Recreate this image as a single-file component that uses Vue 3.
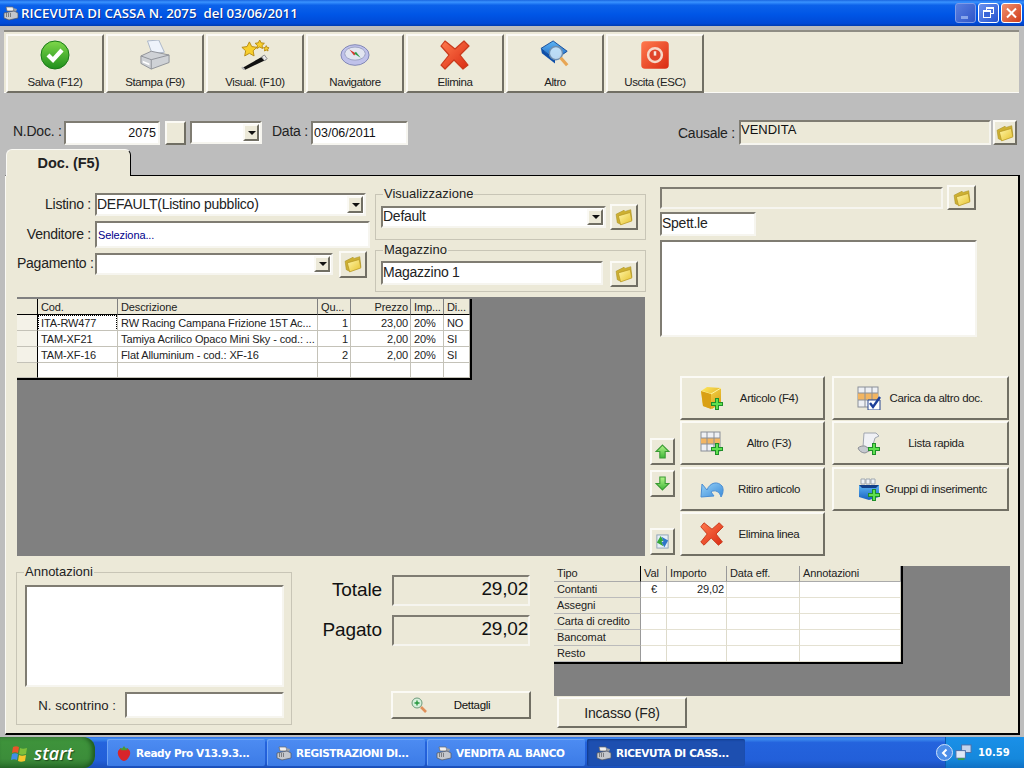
<script setup>
const tools = [
  { label: 'Salva (F12)', icon: 'i-check' },
  { label: 'Stampa (F9)', icon: 'i-printer' },
  { label: 'Visual. (F10)', icon: 'i-wand' },
  { label: 'Navigatore', icon: 'i-compass' },
  { label: 'Elimina', icon: 'i-x' },
  { label: 'Altro', icon: 'i-book' },
  { label: 'Uscita (ESC)', icon: 'i-power' }
]
const rows = [
  { cod: 'ITA-RW477', des: 'RW Racing Campana Frizione 15T Ac...', qu: '1', pr: '23,00', imp: '20%', di: 'NO', focus: true },
  { cod: 'TAM-XF21', des: 'Tamiya Acrilico Opaco Mini Sky - cod.: ...', qu: '1', pr: '2,00', imp: '20%', di: 'SI' },
  { cod: 'TAM-XF-16', des: 'Flat Alluminium - cod.: XF-16', qu: '2', pr: '2,00', imp: '20%', di: 'SI' }
]
const actions = [
  { label: 'Articolo (F4)', icon: 'i-box', side: 'a' },
  { label: 'Carica da altro doc.', icon: 'i-gridcheck', side: 'b' },
  { label: 'Altro (F3)', icon: 'i-gridplus', side: 'a' },
  { label: 'Lista rapida', icon: 'i-scroll', side: 'b' },
  { label: 'Ritiro articolo', icon: 'i-undo', side: 'a' },
  { label: 'Gruppi di inserimentc', icon: 'i-group', side: 'b' },
  { label: 'Elimina linea', icon: 'i-x', side: 'a' }
]
const pays = [
  { t: 'Contanti', v: '€', i: '29,02' },
  { t: 'Assegni', v: '', i: '' },
  { t: 'Carta di credito', v: '', i: '' },
  { t: 'Bancomat', v: '', i: '' },
  { t: 'Resto', v: '', i: '' }
]
const tasks = [
  { label: 'Ready Pro V13.9.3...', icon: 'i-berry' },
  { label: 'REGISTRAZIONI DI...', icon: 'i-till' },
  { label: 'VENDITA AL BANCO', icon: 'i-till' },
  { label: 'RICEVUTA DI CASS...', icon: 'i-till', active: true }
]
</script>

<template>
  <div class="win">
    <svg class="defs" width="0" height="0" aria-hidden="true">
      <defs>
        <linearGradient id="gGreen" x1="0" y1="0" x2="0" y2="1"><stop offset="0" stop-color="#7fd84a"/><stop offset="1" stop-color="#1f8f1c"/></linearGradient>
        <linearGradient id="gLime" x1="0" y1="0" x2="0" y2="1"><stop offset="0" stop-color="#b4f58a"/><stop offset="1" stop-color="#3fb838"/></linearGradient>
        <linearGradient id="gRed" x1="0" y1="0" x2="1" y2="1"><stop offset="0" stop-color="#ff7a4d"/><stop offset="1" stop-color="#d92a12"/></linearGradient>
        <linearGradient id="gGold" x1="0" y1="0" x2="1" y2="1"><stop offset="0" stop-color="#fff6a8"/><stop offset="1" stop-color="#e6c22e"/></linearGradient>
        <linearGradient id="gCube" x1="0" y1="0" x2="1" y2="1"><stop offset="0" stop-color="#ffe95e"/><stop offset="1" stop-color="#d69a10"/></linearGradient>
        <linearGradient id="gBlue" x1="0" y1="0" x2="0" y2="1"><stop offset="0" stop-color="#5db6f5"/><stop offset="1" stop-color="#1a62c0"/></linearGradient>
        <linearGradient id="gSky" x1="0" y1="0" x2="1" y2="1"><stop offset="0" stop-color="#9ad4f8"/><stop offset="1" stop-color="#3a8ad8"/></linearGradient>
      </defs>
      <symbol id="i-plus" viewBox="0 0 12 12"><path d="M4 0h4v4h4v4H8v4H4V8H0V4h4z" fill="#1f8f2a"/><path d="M5 1h2v4h4v2H7v4H5V7H1V5h4z" fill="#5fe04f"/></symbol>
      <symbol id="i-check" viewBox="0 0 30 30"><circle cx="15" cy="15" r="14" fill="url(#gGreen)" stroke="#1a7a18"/><path d="M8 15l5 5 9-10" fill="none" stroke="#fff" stroke-width="4.2"/></symbol>
      <symbol id="i-printer" viewBox="0 0 32 32"><path d="M8 1l12-1 6 13-13 2z" fill="#eef3fb" stroke="#a9b4c6"/><path d="M1 17l11-5 19 4v8L12 31 1 25z" fill="#cfd2d6" stroke="#8d9096"/><path d="M1 17l11 4 19-5" fill="none" stroke="#8d9096"/><path d="M12 21v10" stroke="#8d9096"/><path d="M3 22l7 3v2l-7-3z" fill="#fff"/></symbol>
      <symbol id="i-wand" viewBox="0 0 32 32"><path d="M2 30l23-13 3 4L5 32z" fill="#111"/><path d="M23 18l3-2 3 4-3 2z" fill="#e8e8e8" stroke="#888"/><path d="M2 29l3 3" stroke="#bbb" stroke-width="2"/><path d="M10 2l2.500 5 5.500.8-4 3.700 1 5.500-5-2.800-5 2.800 1-5.500-4-3.700 5.500-.8z" fill="#f8cf2c" stroke="#b58a10"/><path d="M21 0l1.500 3 3.500.5-2.500 2.300.6 3.300-3.100-1.700-3 1.700.6-3.300-2.500-2.300 3.400-.5z" fill="#f8cf2c" stroke="#b58a10"/><path d="M28 6l1 2 2 .3-1.500 1.400.4 2-1.900-1-1.900 1 .4-2-1.500-1.400 2-.3z" fill="#f8cf2c" stroke="#b58a10"/></symbol>
      <symbol id="i-compass" viewBox="0 0 32 32"><ellipse cx="16" cy="16" rx="15" ry="11" fill="#bfc1ea" stroke="#7d83b2"/><ellipse cx="16" cy="14.500" rx="11" ry="7" fill="#e2e5f0" stroke="#9aa0c0"/><path d="M10 10l7 4.500-2 2z" fill="#d8342a"/><path d="M22 19l-7-4.500 2-2z" fill="#2d9a44"/></symbol>
      <symbol id="i-x" viewBox="0 0 30 30"><path d="M5 1l10 8 9-8 5 5-9 9 8 10-5 4-9-9-9 9-4-4 8-10L1 6z" fill="url(#gRed)" stroke="#c93a1c" stroke-linejoin="round" stroke-width="1.200"/></symbol>
      <symbol id="i-book" viewBox="0 0 32 32"><path d="M1 9L14 1l15 11-13 9z" fill="url(#gBlue)" stroke="#124a99"/><path d="M1 9l15 12v4L2 14z" fill="#0f4fa8"/><circle cx="17" cy="14" r="7" fill="#d4ebfa" fill-opacity=".85" stroke="#6f8fb0" stroke-width="1.500"/><path d="M22 19l7 8" stroke="#e8a654" stroke-width="3.400"/></symbol>
      <symbol id="i-power" viewBox="0 0 24 24"><rect x="1" y="1" width="22" height="22" rx="3" fill="url(#gRed)"/><circle cx="12" cy="12" r="5.500" fill="#e0442a" stroke="#f6d8c8" stroke-width="2"/><path d="M12 9v3.500" stroke="#f6e8e0" stroke-width="2"/></symbol>
      <symbol id="i-folder" viewBox="0 0 16 16"><path d="M1 5.500l7-3.500 1 1 5-1.500 1 9-10 4-3-1.500z" fill="#cdb032" stroke="#a88f20" stroke-width=".5"/><path d="M3 7l10.500-3 1.500 7.500-10 3.500z" fill="url(#gGold)" stroke="#b39420" stroke-width=".6"/></symbol>
      <symbol id="i-box" viewBox="0 0 24 24"><path d="M1 5l6-4 14 1v15l-9 6-9-3z" fill="url(#gCube)"/><path d="M1 5l10 3 10-6" fill="none" stroke="#fff3a0"/><path d="M11 8v15l-8-3-2-15z" fill="#d9a015"/><use href="#i-plus" x="11" y="12" width="12" height="12"/></symbol>
      <symbol id="i-gridcheck" viewBox="0 0 24 24"><rect x="1" y="1" width="20" height="20" fill="#eef0f4" stroke="#8a8f98"/><rect x="1" y="7" width="20" height="7" fill="#f2b562"/><path d="M8 1v20M15 1v20M1 7h20M1 14h20" stroke="#8a8f98"/><path d="M11 14h12v10H11z" fill="#fff" stroke="#28468f"/><path d="M13 17l3 4 7-10" fill="none" stroke="#1c3f9a" stroke-width="2.400"/></symbol>
      <symbol id="i-gridplus" viewBox="0 0 24 24"><rect x="1" y="1" width="19" height="19" fill="#eef0f4" stroke="#8a8f98"/><rect x="1" y="7" width="19" height="6" fill="#f2b562"/><path d="M7 1v19M14 1v19M1 7h19M1 13h19" stroke="#8a8f98"/><use href="#i-plus" x="11" y="12" width="12" height="12"/></symbol>
      <symbol id="i-scroll" viewBox="0 0 24 24"><path d="M7 2h12l3 3-4 2-3 10-9-1z" fill="#f0f1f5" stroke="#a0a6b0"/><path d="M1 17c2-2 4-2 7-2l6 4-6 3c-3 0-6-2-7-5z" fill="#c6c9cf" stroke="#8d9096"/><use href="#i-plus" x="11" y="12" width="12" height="12"/></symbol>
      <symbol id="i-undo" viewBox="0 0 24 24"><path d="M7 13C10 5 18 4 22 9c2 3 1 8-1 11-1-5-6-8-10-5l3 4-13 1 1-13z" fill="url(#gSky)" stroke="#4a8ed4"/></symbol>
      <symbol id="i-group" viewBox="0 0 24 24"><path d="M2 8h20v12l-10 3-10-3z" fill="url(#gBlue)"/><path d="M4 2h4v5H4zM9 2h4v5H9zM14 2h4v5h-4z" fill="#eef2f6" stroke="#a0a8b0"/><path d="M2 8h20l-3 3H5z" fill="#123f88"/><use href="#i-plus" x="11" y="12" width="12" height="12"/></symbol>
      <symbol id="i-up" viewBox="0 0 14 14"><path d="M7 1l6 6H9.500v6h-5V7H1z" fill="url(#gLime)" stroke="#3a9a34"/></symbol>
      <symbol id="i-down" viewBox="0 0 14 14"><path d="M7 13l6-6H9.500V1h-5v6H1z" fill="url(#gLime)" stroke="#3a9a34"/></symbol>
      <symbol id="i-refresh" viewBox="0 0 16 16"><rect x="2" y="1" width="12" height="14" fill="#e6eff6" stroke="#8ea2b4"/><path d="M2 9l4-7 3 5-2 1 2 5z" fill="#35a83a"/><path d="M14 7l-4 7-3-5 2-1-2-5z" fill="#2f76c8"/></symbol>
      <symbol id="i-zoom" viewBox="0 0 16 16"><circle cx="6" cy="6" r="5" fill="#d6f0dc" stroke="#6d9a7a"/><path d="M6 3.500v5M3.500 6h5" stroke="#25963c" stroke-width="1.400"/><path d="M10 10l5 5" stroke="#e0905a" stroke-width="2.600"/></symbol>
      <symbol id="i-berry" viewBox="0 0 16 18"><path d="M8 5c4-2 7 0 7 4 0 4-4 9-7 9s-7-5-7-9c0-4 3-6 7-4z" fill="#d8242a"/><path d="M3 3l3 1 2-3 2 3 3-1-2 3H5z" fill="#4a9a30"/></symbol>
      <symbol id="i-till" viewBox="0 0 16 16"><path d="M3 2h7l1 4H4z" fill="#eef0f2" stroke="#666" stroke-width=".7"/><path d="M10 3l4 1-1 3-2-1z" fill="#9aa0a8"/><path d="M1 8l10-2 4 2v5l-9 2-5-2z" fill="#c4c7cc" stroke="#55585e" stroke-width=".7"/><path d="M3 9h1M5 9h1M7 9h1M3 11h1M5 11h1M7 11h1" stroke="#333"/></symbol>
      <symbol id="i-flag" viewBox="0 0 18 18"><path d="M2 3c2-1 4-1 6 0l-1 6c-2-1-4-1-6 0z" fill="#e8552a"/><path d="M9 4c2 1 4 1 7 0l-1 6c-3 1-5 1-7 0z" fill="#7ec03a"/><path d="M1 10c2-1 4-1 6 0l-1 6c-2-1-4-1-6 0z" fill="#3f8ee8"/><path d="M8 11c2 1 4 1 7 0l-1 6c-3 1-5 1-7 0z" fill="#f6c62c"/></symbol>
      <symbol id="i-net" viewBox="0 0 18 18"><rect x="7" y="1" width="10" height="8" fill="#c4d4ec" stroke="#4a6ea8"/><rect x="1" y="7" width="10" height="8" fill="#dfe8f6" stroke="#4a6ea8"/><path d="M3 16h7" stroke="#39a04a" stroke-width="2"/></symbol>
    </svg>

    <header class="title">
      <svg class="title-ico"><use href="#i-till"/></svg>
      <span class="title-text">RICEVUTA DI CASSA N. 2075&nbsp; del 03/06/2011</span>
      <span class="cap cap-min"><i></i></span>
      <span class="cap cap-res"><i></i><b></b></span>
      <span class="cap cap-close">
        <svg viewBox="0 0 12 12"><path d="M1.500 1.500l9 9M10.500 1.500l-9 9" stroke="#fff" stroke-width="2"/></svg>
      </span>
    </header>

    <main class="client">
      <nav class="toolbar">
        <button v-for="t in tools" :key="t.label" class="raised tool">
          <svg class="tool-ico"><use :href="'#' + t.icon"/></svg>
          <span>{{ t.label }}</span>
        </button>
      </nav>

      <section class="docrow">
        <label class="l14 ndoc">N.Doc. :</label>
        <div class="sunken f-ndoc num">2075</div>
        <button class="raised b-small"></button>
        <div class="sunken f-combo"><span class="raised arrow"><i></i></span></div>
        <label class="l14 ldata">Data :</label>
        <div class="sunken f-data">03/06/2011</div>
        <label class="l14 lcaus">Causale :</label>
        <div class="sunken f-caus beige">VENDITA</div>
        <button class="raised fold f-foldc"><svg><use href="#i-folder"/></svg></button>
      </section>

      <div class="tab">Doc. (F5)</div>

      <section class="panel">
        <div class="upper">
          <div class="left">
            <div class="forms">
              <div class="forms-a">
                <div class="frow h23">
                  <label class="l14">Listino :</label>
                  <div class="sunken w271 txt">DEFAULT(Listino pubblico)<span class="raised arrow"><i></i></span></div>
                </div>
                <div class="frow h27">
                  <label class="l14">Venditore :</label>
                  <div class="sunken w275 sel">Seleziona...</div>
                </div>
                <div class="frow h22">
                  <label class="l14">Pagamento :</label>
                  <div class="sunken w238"><span class="raised arrow"><i></i></span></div>
                  <button class="raised fold f-foldp"><svg><use href="#i-folder"/></svg></button>
                </div>
              </div>
              <div class="forms-b">
                <fieldset class="group g-vis">
                  <legend>Visualizzazione</legend>
                  <div class="grow">
                    <div class="sunken w225 txt">Default<span class="raised arrow"><i></i></span></div>
                    <button class="raised fold f-fold28"><svg><use href="#i-folder"/></svg></button>
                  </div>
                </fieldset>
                <fieldset class="group g-mag">
                  <legend>Magazzino</legend>
                  <div class="grow">
                    <div class="sunken w222 txt">Magazzino 1</div>
                    <button class="raised fold f-fold28"><svg><use href="#i-folder"/></svg></button>
                  </div>
                </fieldset>
              </div>
            </div>

            <div class="gridarea">
              <table class="grid maingrid">
                <colgroup><col class="c0"><col class="c1"><col class="c2"><col class="c3"><col class="c4"><col class="c5"><col class="c6"></colgroup>
                <thead>
                  <tr><th></th><th>Cod.</th><th>Descrizione</th><th>Qu...</th><th class="r">Prezzo</th><th>Imp...</th><th>Di...</th></tr>
                </thead>
                <tbody>
                  <tr v-for="r in rows" :key="r.cod">
                    <th class="rh"></th>
                    <td><span :class="{ focus: r.focus }">{{ r.cod }}</span></td>
                    <td class="clip">{{ r.des }}</td>
                    <td class="r">{{ r.qu }}</td>
                    <td class="r">{{ r.pr }}</td>
                    <td>{{ r.imp }}</td>
                    <td>{{ r.di }}</td>
                  </tr>
                  <tr class="blank"><th></th><td></td><td></td><td></td><td></td><td></td><td></td></tr>
                </tbody>
              </table>
            </div>
          </div>

          <div class="right">
            <div class="r-top">
              <div class="rrow">
                <div class="sunken w283 beige"></div>
                <button class="raised fold f-foldr"><svg><use href="#i-folder"/></svg></button>
              </div>
              <div class="sunken w96 txt">Spett.le</div>
              <div class="sunken w317"></div>
            </div>
            <div class="r-bottom">
              <div class="arrows">
                <button class="raised arrowbtn"><svg><use href="#i-up"/></svg></button>
                <button class="raised arrowbtn"><svg><use href="#i-down"/></svg></button>
                <button class="raised arrowbtn lastb"><svg><use href="#i-refresh"/></svg></button>
              </div>
              <div class="actions">
                <button v-for="a in actions" :key="a.label" class="raised action" :class="a.side">
                  <svg><use :href="'#' + a.icon"/></svg>
                  <span>{{ a.label }}</span>
                </button>
              </div>
            </div>
          </div>
        </div>

        <div class="lower">
          <fieldset class="group g-ann">
            <legend>Annotazioni</legend>
            <div class="sunken ann-box"></div>
            <div class="scont">
              <label class="l14">N. scontrino :</label>
              <div class="sunken scont-f"></div>
            </div>
          </fieldset>

          <div class="totals">
            <div class="trow"><label>Totale</label><div class="sunken beige tval">29,02</div></div>
            <div class="trow"><label>Pagato</label><div class="sunken beige tval">29,02</div></div>
            <button class="raised dett"><svg><use href="#i-zoom"/></svg><span>Dettagli</span></button>
          </div>

          <div class="pay">
            <div class="pay-area">
              <table class="grid paygrid">
                <colgroup><col class="p0"><col class="p1"><col class="p2"><col class="p3"><col class="p4"></colgroup>
                <thead>
                  <tr><th>Tipo</th><th>Val</th><th>Importo</th><th>Data eff.</th><th>Annotazioni</th></tr>
                </thead>
                <tbody>
                  <tr v-for="p in pays" :key="p.t">
                    <th class="ptype">{{ p.t }}</th>
                    <td class="ctr">{{ p.v }}</td>
                    <td class="r">{{ p.i }}</td>
                    <td></td>
                    <td></td>
                  </tr>
                </tbody>
              </table>
            </div>
            <button class="raised incasso">Incasso (F8)</button>
          </div>
        </div>
      </section>
    </main>

    <footer class="taskbar">
      <div class="start"><svg><use href="#i-flag"/></svg><span>start</span></div>
      <div class="tasks">
        <div v-for="t in tasks" :key="t.label" class="task" :class="{ active: t.active }">
          <svg><use :href="'#' + t.icon"/></svg>
          <span>{{ t.label }}</span>
        </div>
      </div>
      <div class="tray">
        <span class="chev">
          <svg viewBox="0 0 10 10"><path d="M6.500 1.500L3 5l3.500 3.500" fill="none" stroke="#fff" stroke-width="2"/></svg>
        </span>
        <svg class="net"><use href="#i-net"/></svg>
        <span class="clock">10.59</span>
      </div>
    </footer>
  </div>
</template>

<style>
html, body { margin: 0; padding: 0; }
</style>

<style scoped>
* { box-sizing: border-box; }
.defs { position: absolute; }
.win {
  width: 1024px; height: 768px; overflow: hidden; display: flex; flex-direction: column;
  background: #bdbdbd; font-family: "Liberation Sans", Arial, sans-serif; color: #111; font-size: 12px;
}
button { font-family: inherit; color: inherit; padding: 0; margin: 0; }
.raised {
  background: #ece9d8; border: 2px solid; border-color: #fbfaf5 #716f64 #716f64 #fbfaf5; border-radius: 0;
}
.sunken {
  position: relative; background: #fff; border: 2px solid; border-color: #7f7c72 #f6f5ef #f6f5ef #7f7c72;
  flex: none;
}
.beige { background: #ece9d8; }
.l14 { font-size: 14px; color: #222; white-space: nowrap; letter-spacing: -.25px; }

/* title */
.title {
  height: 26px; flex: none; display: flex; align-items: center; color: #fff; padding-right: 2px;
  background: linear-gradient(180deg, #1a66e0 0, #3a93ff 8%, #0c62ea 20%, #0056e6 55%, #0049d6 90%, #003cb0 100%);
}
.title-ico { width: 16px; height: 16px; margin-left: 3px; }
.title-text { font-family: "Open Sans", sans-serif; font-weight: 600; font-size: 13.300px; margin-left: 2px; flex: 1; text-shadow: 1px 1px 0 #0a2f8c; white-space: nowrap; }
.cap { width: 21px; height: 20px; border: 1px solid #fff; border-radius: 3px; margin-left: 2px; position: relative; display: block; flex: none; background: linear-gradient(135deg, #6d93ee, #2452cf); }
.cap-min { background: linear-gradient(135deg, #5a7fe0, #2e55c8); border-color: #7c9be8; }
.cap-min i { position: absolute; left: 5px; bottom: 3px; width: 7px; height: 3px; background: #88a5ea; }
.cap-res i { position: absolute; left: 7px; top: 3px; width: 8px; height: 7px; border: 1px solid #fff; border-top-width: 2px; }
.cap-res b { position: absolute; left: 4px; top: 6px; width: 8px; height: 8px; border: 1px solid #fff; border-top-width: 2px; background: #3a65d8; }
.cap-close { background: linear-gradient(135deg, #f0916f, #d13c1a); }
.cap-close svg { position: absolute; left: 3px; top: 3px; width: 13px; height: 12px; }

/* client */
.client { flex: 1; display: flex; flex-direction: column; padding: 4px 5px 0 5px; min-height: 0; }
.toolbar { height: 63px; background: #ece9d8; margin-left: -1px; border-bottom: 1px solid #fbfaf5; border-top: 2px solid #8f8d84; display: flex; gap: 2px; padding: 2px 0 0 2px; flex: none; }
.tool { width: 98px; height: 59px; display: flex; flex-direction: column; align-items: center; font-size: 11.500px; letter-spacing: -.42px; padding-top: 4px; color: #222; }
.tool-ico { width: 30px; height: 30px; margin-bottom: 6px; display: block; }
.docrow { display: flex; align-items: flex-start; height: 27px; margin-top: 27px; flex: none; }
.docrow .l14 { padding-top: 3px; }
.ndoc { margin-left: 8px; width: 51px; }
.f-ndoc { width: 96px; height: 24px; margin-top: 1px; font-size: 12.500px; line-height: 20px; padding-right: 2px; text-align: right; }
.b-small { width: 21px; height: 24px; margin: 1px 0 0 5px; }
.f-combo { width: 72px; height: 23px; margin: 1px 0 0 4px; }
.ldata { margin-left: 10px; width: 39px; }
.f-data { width: 97px; height: 24px; margin-top: 1px; font-size: 12.500px; line-height: 20px; padding-left: 1px; }
.lcaus { margin-left: 270px; width: 61px; padding-top: 5px !important; }
.f-caus { width: 252px; height: 25px; font-size: 13px; line-height: 16px; }
.f-foldc { width: 24px; height: 25px; margin-left: 2px; }

.arrow { position: absolute; right: 1px; top: 1px; bottom: 1px; width: 16px; display: block; }
.arrow i { position: absolute; left: 3px; top: 50%; margin-top: -2px; border: 4px solid transparent; border-top: 4px solid #111; border-bottom: 0; }
.fold { display: flex; align-items: center; justify-content: center; flex: none; }
.fold svg { width: 18px; height: 18px; }

.tab {
  width: 125px; height: 27px; margin: 2px 0 0 1px; background: #ece9d8; border: 1px solid #000; border-bottom: 0;
  border-left-color: #fbfaf5; border-top-color: #fbfaf5; border-radius: 6px 6px 0 0; font-weight: 700; font-size: 14.500px;
  text-align: center; line-height: 26px; color: #222; flex: none; position: relative; z-index: 1; margin-bottom: -1px;
}
.panel {
  height: 560px; flex: none; width: 1015px; background: #ece9d8; border: 1px solid #000; border-left-color: #fbfaf5;
  border-width: 1px 2px 2px 1px; padding: 0 0 0 10px; display: flex; flex-direction: column;
}
.upper { display: flex; height: 380px; flex: none; }
.left { width: 628px; flex: none; margin-left: 1px; }
.forms { display: flex; height: 121px; }
.forms-a { width: 358px; flex: none; padding-top: 17px; display: flex; flex-direction: column; gap: 5px; }
.frow { display: flex; align-items: center; }
.frow .l14 { width: 74px; text-align: right; margin-right: 4px; flex: none; padding-bottom: 2px; }
.h23 { height: 23px; } .h27 { height: 27px; } .h22 { height: 22px; }
.txt { font-size: 14px; padding-left: 0; line-height: 19px; color: #222; letter-spacing: -.25px; }
.w271 { width: 271px; height: 23px; }
.w275 { width: 275px; height: 27px; }
.sel { font-size: 11px; color: #00008b; line-height: 24px; padding-left: 1px; letter-spacing: -.1px; }
.w238 { width: 238px; height: 22px; }
.f-foldp { width: 28px; height: 27px; margin-left: 6px; }
.forms-b { flex: 1; padding-top: 10px; display: flex; flex-direction: column; gap: 2px; }
.group { margin: 0; padding: 0; border: 1px solid #c8c5b6; min-width: 0; }
.group legend { font-size: 13px; line-height: 16px; margin-left: 7px; padding: 0 1px; color: #222; }
.g-vis { height: 54px; width: 271px; }
.g-mag { height: 50px; width: 271px; }
.grow { display: flex; padding: 2px 0 0 5px; gap: 4px; align-items: flex-start; }
.g-mag .grow { padding-top: 3px; gap: 7px; }
.w225 { width: 225px; height: 22px; margin-top: 2px; line-height: 17px; }
.w222 { width: 222px; height: 24px; line-height: 18px; }
.f-fold28 { width: 28px; height: 26px; }

.gridarea { height: 259px; background: #808080; padding-top: 2px; }
.grid { border-collapse: separate; border-spacing: 0; table-layout: fixed; background: #fff; font-size: 11px; color: #222; border-right: 2px solid #000; border-bottom: 2px solid #000; letter-spacing: -.12px; }
.maingrid { width: 455px; }
.grid th, .grid td { height: 16px; padding: 1px 2px 0 3px; font-weight: 400; text-align: left; white-space: nowrap; overflow: hidden; line-height: 14px; border-right: 1px solid #c4c2b8; border-bottom: 1px solid #c4c2b8; }
.grid thead th { background: #ece9d8; border-right-color: #808080; border-bottom: 1px solid #000; }
.grid tbody tr > th:first-child { background: #f4f2e8; border-right: 1px solid #000; }
.grid tbody .blank th { background: #ece9d8 !important; }
.grid thead th:first-child { border-right-color: #000; }
.grid .r { text-align: right; }
.grid tr:last-child td, .grid tr:last-child th { height: 15px; }
.c0 { width: 21px; } .c1 { width: 80px; } .c2 { width: 200px; } .c3 { width: 33px; } .c4 { width: 60px; } .c5 { width: 33px; } .c6 { width: 26px; }
.focus { display: block; outline: 1px dotted #000; outline-offset: 0; margin-left: -2px; padding-left: 2px; margin-right: -1px; }

.right { flex: 1; padding-left: 5px; display: flex; flex-direction: column; justify-content: space-between; }
.r-top { padding: 10px 0 0 10px; display: flex; flex-direction: column; gap: 3px; }
.rrow { display: flex; align-items: center; gap: 4px; height: 23px; }
.w283 { width: 283px; height: 22px; }
.f-foldr { width: 29px; height: 25px; }
.w96 { width: 96px; height: 24px; line-height: 18px; }
.w317 { width: 317px; height: 97px; margin-top: 1px; }
.r-bottom { display: flex; height: 180px; }
.arrows { width: 25px; padding-top: 62px; display: flex; flex-direction: column; gap: 5px; flex: none; }
.arrowbtn { height: 27px; width: 25px; display: flex; align-items: center; justify-content: center; }
.arrowbtn svg { width: 15px; height: 15px; }
.lastb { margin-top: 26px; }
.actions { display: grid; grid-template-columns: 145px 177px; grid-auto-rows: 44px; column-gap: 7px; row-gap: 1.330px; margin-left: 5px; }
.action { display: flex; align-items: center; font-size: 11.500px; letter-spacing: -.33px; color: #222; }
.action svg { width: 24px; height: 24px; flex: none; }
.action span { flex: 1; text-align: center; white-space: nowrap; min-width: 0; }
.action.a { padding: 0 13px 0 18px; }
.action.a svg { margin-right: 4px; }
.action.b { padding: 0 16px 0 23px; }

.lower { display: flex; padding-top: 8px; position: relative; }
.g-ann { width: 276px; height: 161px; flex: none; padding: 5px 6px 0 8px; }
.g-ann legend { margin-left: -1px; }
.ann-box { width: 259px; height: 102px; }
.scont { display: flex; align-items: center; margin-top: 5px; }
.scont .l14 { width: 91px; text-align: right; font-size: 13.200px; margin-right: 9px; flex: none; letter-spacing: 0; }
.scont-f { width: 159px; height: 26px; }
.totals { width: 238px; flex: none; padding-top: 11px; display: flex; flex-direction: column; align-items: flex-end; }
.trow { display: flex; align-items: center; margin-bottom: 9px; }
.trow label { font-size: 19px; margin-right: 10px; color: #111; letter-spacing: -.1px; padding-bottom: 2px; }
.tval { width: 138px; height: 31px; text-align: right; font-size: 19px; line-height: 23px; letter-spacing: -.2px; }
.dett { width: 140px; height: 28px; margin-top: 36px; margin-right: -1px; display: flex; align-items: center; font-size: 11.500px; letter-spacing: -.3px; padding-left: 18px; }
.dett svg { width: 16px; height: 16px; }
.dett span { flex: 1; text-align: center; padding-right: 12px; }
.pay { margin-left: 24px; width: 456px; margin-top: 2px; }
.pay-area { width: 456px; height: 130px; background: #808080; }
.paygrid { width: 349px; }
.paygrid th, .paygrid td { border-right-color: #dedbcb; border-bottom-color: #e4e1d2; padding-top: 0; line-height: 15px; }
.paygrid thead th { border-right-color: #999; border-bottom-color: #aaa; }
.paygrid .ptype { background: #ece9d8 !important; border-right: 1px solid #999 !important; border-bottom: 1px solid #bbb; }
.ctr { text-align: center !important; }
.p0 { width: 87px; } .p1 { width: 26px; } .p2 { width: 60px; } .p3 { width: 73px; } .p4 { width: 101px; }
.incasso { width: 130px; height: 31px; margin: 1px 0 0 3px; font-size: 14px; display: block; color: #222; letter-spacing: -.2px; }

/* taskbar */
.taskbar { margin-top: auto; height: 31px; flex: none; display: flex; color: #fff; background: linear-gradient(180deg, #2f6fe8 0, #3d8df0 6%, #2463dd 18%, #225fd9 75%, #1a4eb8 100%); }
.start { width: 95px; display: flex; align-items: center; padding-left: 11px; border-radius: 0 12px 12px 0; background: linear-gradient(180deg, #4f9a4d 0, #3e933b 12%, #3c8d3a 70%, #2a6f2b 100%); flex: none; box-shadow: inset -3px 0 4px #1f5a20; }
.start svg { width: 18px; height: 18px; }
.start span { font-family: "Open Sans", sans-serif; font-style: italic; font-weight: 600; font-size: 18px; margin-left: 5px; text-shadow: 1px 1px 1px #1c4a1c; }
.tasks { display: flex; gap: 2px; padding: 2px 0 0 12px; flex: 1; }
.task { width: 158px; height: 27px; border-radius: 2px; display: flex; align-items: center; padding-left: 9px; background: linear-gradient(180deg, #4d8cf2, #3c7be6); font-family: "DejaVu Sans", sans-serif; font-weight: 700; font-size: 10.500px; letter-spacing: -.4px; white-space: nowrap; overflow: hidden; box-shadow: inset 1px 1px 0 #6ea4f5; }
.task.active { background: #1d4fb0; box-shadow: inset 1px 1px 2px #123a8a; }
.task svg { width: 16px; height: 16px; margin-right: 4px; flex: none; }
.tray { width: 79px; position: relative; display: flex; align-items: center; background: linear-gradient(180deg, #1a90e8, #1588dc 70%, #0f70c4); flex: none; padding-left: 10px; box-shadow: inset 1px 0 0 #0b5bb0; }
.chev { position: absolute; left: -9px; top: 7px; width: 17px; height: 17px; border-radius: 50%; background: #4d8ee8; border: 1px solid #cfe2fb; display: flex; align-items: center; justify-content: center; }
.chev svg { width: 10px; height: 10px; }
.net { width: 17px; height: 17px; flex: none; }
.clock { font-family: "DejaVu Sans", sans-serif; font-weight: 700; font-size: 10px; margin-left: 6px; }
</style>
